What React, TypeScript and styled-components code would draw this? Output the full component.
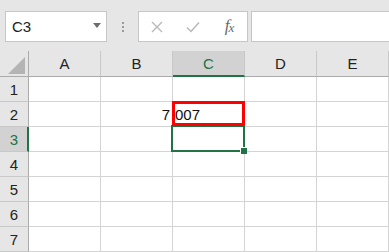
import React from 'react';
import styled, { createGlobalStyle } from 'styled-components';

const GlobalStyle = createGlobalStyle`
  html, body {
    margin: 0;
    padding: 0;
    background: #ffffff;
  }
  body {
    font-family: 'Liberation Sans', Arial, sans-serif;
  }
`;

const GREEN = '#217346';

const Sheet = styled.div`
  width: 389px;
  height: 252px;
  overflow: hidden;
  background: #ffffff;
`;

const Toolbar = styled.div`
  height: 51px;
  background: #e6e6e6;
  display: flex;
  align-items: flex-start;
  padding: 11px 0 0 5px;
  box-sizing: border-box;
`;

const NameBox = styled.div`
  width: 102px;
  height: 31px;
  box-sizing: border-box;
  background: #ffffff;
  border: 1px solid #c6c6c6;
  display: flex;
  align-items: center;
  justify-content: space-between;
  padding: 0 5px 0 6px;
  font-size: 15px;
  color: #222222;
`;

const Caret = styled.span`
  width: 0;
  height: 0;
  border-left: 4px solid transparent;
  border-right: 4px solid transparent;
  border-top: 5px solid #6d6d6d;
  margin-top: -2px;
`;

const Grip = styled.div`
  width: 31px;
  height: 31px;
  display: flex;
  flex-direction: column;
  align-items: center;
  justify-content: center;
  gap: 2px;

  span {
    width: 2px;
    height: 2px;
    background: #9a9a9a;
  }
`;

const ButtonGroup = styled.div`
  width: 110px;
  height: 31px;
  box-sizing: border-box;
  background: #ffffff;
  border: 1px solid #c6c6c6;
  display: flex;
  align-items: center;
`;

const ToolButton = styled.div<{ $w: number }>`
  width: ${(p) => p.$w}px;
  height: 100%;
  display: flex;
  align-items: center;
  justify-content: center;
`;

const Fx = styled.span`
  font-family: 'Liberation Serif', 'Times New Roman', serif;
  font-style: italic;
  font-size: 17px;
  color: #6a6a6a;
  letter-spacing: -1px;
  margin-top: -2px;

  sub {
    font-size: 13px;
    vertical-align: -1px;
  }
`;

const FormulaInput = styled.div`
  flex: 1;
  height: 31px;
  margin-left: 3px;
  box-sizing: border-box;
  background: #ffffff;
  border: 1px solid #c6c6c6;
  border-right: none;
`;

const Grid = styled.div`
  display: grid;
  grid-template-columns: 29px repeat(5, 72px);
  grid-auto-rows: 25px;
  grid-template-rows: 26px;
`;

const Corner = styled.div`
  background: #e6e6e6;
  border-right: 1px solid #ababab;
  border-bottom: 1px solid #ababab;
  box-sizing: border-box;
  position: relative;

  svg {
    position: absolute;
    left: 8px;
    top: 6px;
  }
`;

const ColHeader = styled.div<{ $active?: boolean }>`
  background: ${(p) => (p.$active ? '#d2d2d2' : '#e6e6e6')};
  border-right: 1px solid #c8c8c8;
  border-bottom: ${(p) => (p.$active ? `2px solid ${GREEN}` : '1px solid #ababab')};
  box-sizing: border-box;
  display: flex;
  align-items: center;
  justify-content: center;
  font-size: 15px;
  color: ${(p) => (p.$active ? GREEN : '#222222')};
  padding-top: ${(p) => (p.$active ? '1px' : '0')};
`;

const RowHeader = styled.div<{ $active?: boolean }>`
  background: ${(p) => (p.$active ? '#d2d2d2' : '#e6e6e6')};
  border-right: ${(p) => (p.$active ? `2px solid ${GREEN}` : '1px solid #ababab')};
  border-bottom: 1px solid #c8c8c8;
  box-sizing: border-box;
  display: flex;
  align-items: center;
  justify-content: center;
  font-size: 15px;
  color: ${(p) => (p.$active ? GREEN : '#222222')};
  padding-left: ${(p) => (p.$active ? '1px' : '0')};
`;

const Cell = styled.div<{ $align?: 'left' | 'right' }>`
  position: relative;
  border-right: 1px solid #d4d4d4;
  border-bottom: 1px solid #d4d4d4;
  box-sizing: border-box;
  display: flex;
  align-items: center;
  justify-content: ${(p) => (p.$align === 'right' ? 'flex-end' : 'flex-start')};
  padding: 1px 2px 0 2px;
  font-size: 15px;
  color: #111111;
`;

const RedFrame = styled.div`
  position: absolute;
  left: -1px;
  top: -1px;
  right: -1px;
  bottom: 0;
  border: 3px solid #ff0000;
  pointer-events: none;
  z-index: 2;
`;

const Selection = styled.div`
  position: absolute;
  left: -2px;
  top: -2px;
  right: -1px;
  bottom: -1px;
  border: 2px solid ${GREEN};
  pointer-events: none;
  z-index: 1;
`;

const Handle = styled.div`
  position: absolute;
  right: -4px;
  bottom: -4px;
  width: 6px;
  height: 6px;
  background: ${GREEN};
  border: 1px solid #ffffff;
  border-right: none;
  border-bottom: none;
`;

const columns = ['A', 'B', 'C', 'D', 'E'];
const rows = [1, 2, 3, 4, 5, 6, 7];

function CellContent ({ row, col }: { row: number; col: string }): React.ReactElement {
  if (row === 2 && col === 'B') {
    return <Cell $align='right'>7</Cell>;
  }

  if (row === 2 && col === 'C') {
    return (
      <Cell>
        007
        <RedFrame />
      </Cell>
    );
  }

  if (row === 3 && col === 'C') {
    return (
      <Cell>
        <Selection>
          <Handle />
        </Selection>
      </Cell>
    );
  }

  return <Cell />;
}

export default function App (): React.ReactElement {
  return (
    <Sheet>
      <GlobalStyle />
      <Toolbar>
        <NameBox>
          <span>C3</span>
          <Caret />
        </NameBox>
        <Grip>
          <span />
          <span />
          <span />
        </Grip>
        <ButtonGroup>
          <ToolButton $w={36}>
            <svg width='12' height='12' viewBox='0 0 12 12'>
              <path d='M1 1 L11 11 M11 1 L1 11' stroke='#b9b9b9' strokeWidth='1.4' fill='none' />
            </svg>
          </ToolButton>
          <ToolButton $w={36}>
            <svg width='14' height='12' viewBox='0 0 14 12'>
              <path d='M1 6.5 L5 10.5 L13 1.5' stroke='#b9b9b9' strokeWidth='1.5' fill='none' />
            </svg>
          </ToolButton>
          <ToolButton $w={36}>
            <Fx>f<sub>x</sub></Fx>
          </ToolButton>
        </ButtonGroup>
        <FormulaInput />
      </Toolbar>
      <Grid>
        <Corner>
          <svg width='18' height='17' viewBox='0 0 18 17'>
            <path d='M17 0 L17 17 L0 17 Z' fill='#b4b4b4' />
          </svg>
        </Corner>
        {columns.map((c) => (
          <ColHeader key={c} $active={c === 'C'}>{c}</ColHeader>
        ))}
        {rows.map((r) => (
          <React.Fragment key={r}>
            <RowHeader $active={r === 3}>{r}</RowHeader>
            {columns.map((c) => (
              <CellContent key={c} row={r} col={c} />
            ))}
          </React.Fragment>
        ))}
      </Grid>
    </Sheet>
  );
}
